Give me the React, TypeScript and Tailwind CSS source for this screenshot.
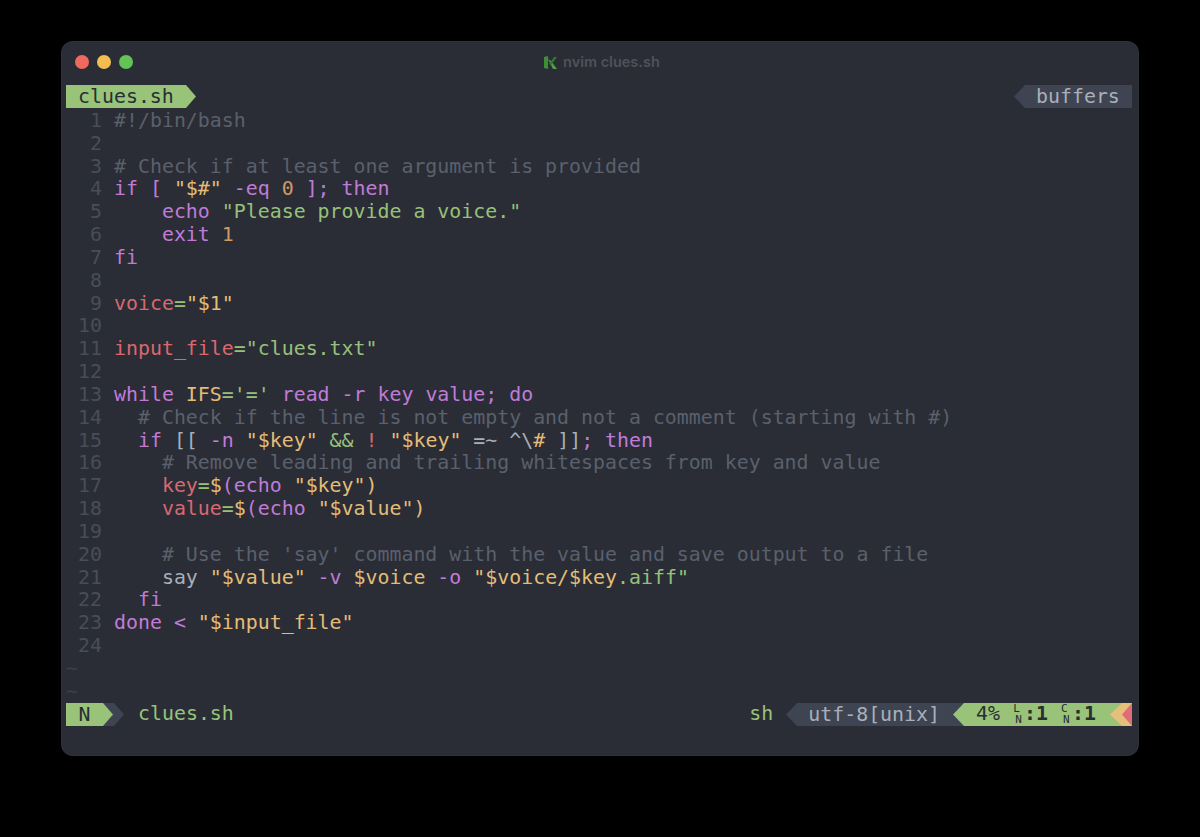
const C = {
  r: "text-[#d9686f]",
  g: "text-[#98c07b]",
  y: "text-[#e3bd78]",
  p: "text-[#c07bd8]",
  o: "text-[#d19a66]",
  c: "text-[#5a606c]",
  f: "text-[#a9afbb]",
};
type K = keyof typeof C;
type T = [K, string];

const LINES: T[][] = [
  [["c", "#!/bin/bash"]],
  [],
  [["c", "# Check if at least one argument is provided"]],
  [["p", "if [ "], ["y", "\"$#\""], ["p", " -eq "], ["o", "0"], ["p", " ]; then"]],
  [["p", "    echo "], ["g", "\"Please provide a voice.\""]],
  [["p", "    exit "], ["o", "1"]],
  [["p", "fi"]],
  [],
  [["r", "voice"], ["g", "="], ["y", "\"$1\""]],
  [],
  [["r", "input_file"], ["g", "="], ["g", "\"clues.txt\""]],
  [],
  [["p", "while "], ["y", "IFS"], ["g", "='='"], ["p", " read -r key value; do"]],
  [["c", "  # Check if the line is not empty and not a comment (starting with #)"]],
  [["p", "  if "], ["f", "[[ "], ["p", "-n "], ["y", "\"$key\""], ["f", " "], ["g", "&&"], ["f", " "], ["r", "!"], ["f", " "], ["y", "\"$key\""], ["f", " =~ ^\\"], ["y", "#"], ["f", " ]]"], ["p", "; then"]],
  [["c", "    # Remove leading and trailing whitespaces from key and value"]],
  [["f", "    "], ["r", "key"], ["g", "="], ["y", "$"], ["p", "(echo "], ["y", "\"$key\")"]],
  [["f", "    "], ["r", "value"], ["g", "="], ["y", "$"], ["p", "(echo "], ["y", "\"$value\")"]],
  [],
  [["c", "    # Use the 'say' command with the value and save output to a file"]],
  [["f", "    say "], ["y", "\"$value\""], ["p", " -v "], ["y", "$voice"], ["p", " -o "], ["y", "\"$voice/$key"], ["g", ".aiff\""]],
  [["p", "  fi"]],
  [["p", "done < "], ["y", "\"$input_file\""]],
  [],
];

function Row({ n, tokens }: { n: number; tokens: T[] }) {
  return (
    <div className="flex h-[22.83px] leading-[22.83px] whitespace-pre">
      <span className="w-[36px] text-right text-[#484d59]">{n}</span>
      <span className="ml-[12px]">
        {tokens.map((t, i) => (
          <span key={i} className={C[t[0]]}>{t[1]}</span>
        ))}
      </span>
    </div>
  );
}

function Arrow({ dir, fill, w = 11 }: { dir: "r" | "l"; fill: string; w?: number }) {
  return (
    <svg width={w} height="23" viewBox={`0 0 ${w} 23`} className="shrink-0 block">
      <path d={dir === "r" ? `M0 0 L${w} 11.5 L0 23 Z` : `M${w} 0 L0 11.5 L${w} 23 Z`} fill={fill} />
    </svg>
  );
}

function StackedIcon({ top }: { top: string }) {
  return (
    <div className="ml-[12px] w-[12px] h-[22px] text-[11px] leading-[11px] flex flex-col items-center">
      <div className="h-[11px] leading-[11px] mr-[3px]">{top}</div>
      <div className="h-[11px] leading-[11px] ml-[1px]">N</div>
    </div>
  );
}

export default function App() {
  return (
    <div className="w-[1200px] h-[837px] bg-black pt-[41px] pl-[61px] font-['DejaVu_Sans_Mono',monospace] text-[19.9px]">
      <div className="w-[1078px] h-[715px] bg-[#2a2d35] rounded-[12px] flex flex-col border border-[#3a3c42]/40">
        <div className="h-[43px] flex items-center shrink-0 relative pl-[13px]">
          <div className="flex gap-[8px] mt-[-3px]">
            <div className="w-[14px] h-[14px] rounded-full bg-[#ee6a5f]" />
            <div className="w-[14px] h-[14px] rounded-full bg-[#f5bd4f]" />
            <div className="w-[14px] h-[14px] rounded-full bg-[#61c454]" />
          </div>
          <div className="absolute left-[482px] top-[10px] flex items-center gap-[6px] font-['Inter',sans-serif] text-[14.5px] leading-[20px] font-semibold text-[#4f525a]">
            <svg width="13" height="13" viewBox="0 0 13 13">
              <path d="M0 1 L4 0 V13 L0 12 Z" fill="#3f8f35" />
              <path d="M4 3 L9 13 H13 L7 5 Z" fill="#4fa33e" />
              <path d="M5 8 L10 1 H13 L7 9 Z" fill="#2f7a2c" />
            </svg>
            <span>nvim clues.sh</span>
          </div>
        </div>

        <div className="flex items-center h-[23px] pl-[4px] pr-[6px] justify-between shrink-0">
          <div className="flex items-center">
            <div className="h-[23px] leading-[23px] bg-[#98c379] text-[#2a2d35] pl-[12px] pr-[12px] w-[120px] whitespace-pre">clues.sh</div>
            <Arrow dir="r" fill="#98c379" w={10} />
          </div>
          <div className="flex items-center">
            <Arrow dir="l" fill="#3e4452" />
            <div className="h-[23px] leading-[23px] bg-[#3e4452] text-[#a9afbb] pl-[11px] w-[107px]">buffers</div>
          </div>
        </div>

        <div className="shrink-0 pl-[4px] mt-[2px]">
          {LINES.map((t, i) => (
            <Row key={i} n={i + 1} tokens={t} />
          ))}
          <div className="h-[22.83px] leading-[22.83px] text-[#3d414b]">~</div>
          <div className="h-[22.83px] leading-[22.83px] text-[#3d414b]">~</div>
        </div>

        <div className="flex items-center h-[23px] pl-[4px] pr-[6px] mt-[-1px] shrink-0 whitespace-pre">
          <div className="h-[23px] leading-[23px] bg-[#98c379] text-[#2a2d35] w-[37px] text-center">N</div>
          <svg width="21" height="23" viewBox="0 0 21 23" className="block shrink-0">
            <path d="M0 0 H11 L21 11.5 L11 23 H0 Z" fill="#3e4452" />
            <path d="M0 0 L10 11.5 L0 23 Z" fill="#98c379" />
          </svg>
          <span className="ml-[14px] text-[#98c379]">clues.sh</span>
          <span className="ml-auto text-[#98c379]">sh</span>
          <div className="ml-[13px] flex items-center">
            <Arrow dir="l" fill="#3e4452" />
            <div className="h-[23px] leading-[23px] bg-[#3e4452] text-[#a9afbb] pl-[11px] pr-[13px]">utf-8[unix]</div>
          </div>
          <div className="flex items-center">
            <div className="bg-[#3e4452] shrink-0">
              <Arrow dir="l" fill="#98c379" />
            </div>
            <div className="h-[23px] bg-[#98c379] text-[#2a2d35] pl-[12px] flex items-center w-[158px] shrink-0">
              <span>4%</span>
              <StackedIcon top="L" />
              <span className="font-bold">:1</span>
              <StackedIcon top="C" />
              <span className="font-bold">:1</span>
            </div>
          </div>
          <svg width="22" height="23" viewBox="0 0 22 23" className="block shrink-0 ml-[-12px]">
            <path d="M12 0 H22 V23 H12 L0 11.5 Z" fill="#e5c07b" />
            <path d="M22 0 L12 11.5 L22 23 Z" fill="#e06c75" />
          </svg>
        </div>
      </div>
    </div>
  );
}
